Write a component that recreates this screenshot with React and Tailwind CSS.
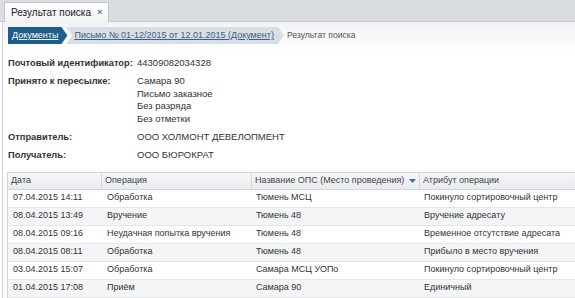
import React from "react";

const rows = [
  ["07.04.2015 14:11", "Обработка", "Тюмень МСЦ", "Покинуло сортировочный центр"],
  ["08.04.2015 13:49", "Вручение", "Тюмень 48", "Вручение адресату"],
  ["08.04.2015 09:16", "Неудачная попытка вручения", "Тюмень 48", "Временное отсутствие адресата"],
  ["08.04.2015 08:11", "Обработка", "Тюмень 48", "Прибыло в место вручения"],
  ["03.04.2015 15:07", "Обработка", "Самара МСЦ УОПо", "Покинуло сортировочный центр"],
  ["01.04.2015 17:08", "Приём", "Самара 90", "Единичный"],
];

export default function App() {
  return (
    <div className="w-[575px] h-[298px] overflow-hidden bg-white text-[#333] [font-family:'Liberation_Sans',Arial,sans-serif]">
      <div className="h-[22px] bg-[#d9dce0] border-b border-[#c6cacf] flex items-end pl-[4px]">
        <div className="relative -mb-[1px] h-[20px] w-[105px] bg-gradient-to-b from-white to-[#f0f2f4] border border-b-0 border-[#c3c7cc] flex items-center pl-[6px] text-[10px] text-[#222]">
          <span>Результат поиска</span>
          <span className="ml-[6px] text-[#3f7fc0] text-[9px] font-bold leading-none">×</span>
        </div>
      </div>
      <div className="ml-[2px] border-l border-[#c9d4df] h-[276px]">
        <div className="h-[30px] bg-gradient-to-b from-[#f0f2f4] to-white pl-[5px] pt-[5px] flex items-start text-[9px]">
          <div className="h-[17px] flex items-center bg-[#1d5d8a] pl-[4px] pr-[9px] [clip-path:polygon(0_0,calc(100%-6px)_0,100%_50%,calc(100%-6px)_100%,0_100%)]">
            <span className="text-white underline">Документы</span>
          </div>
          <div className="-ml-[1px] h-[17px] flex items-center bg-[#d7dee6] pl-[8px] pr-[10px] [clip-path:polygon(0_0,calc(100%-6px)_0,100%_50%,calc(100%-6px)_100%,0_100%,6px_50%)]">
            <span className="text-[#3d5f80] underline">Письмо № 01-12/2015 от 12.01.2015 (Документ)</span>
          </div>
          <div className="h-[17px] flex items-center pl-[3px] text-[#555] text-[8.6px]">Результат поиска</div>
        </div>
        <div className="pl-[5px] pt-[5px] text-[9.5px] leading-[12.5px]">
          <div className="flex">
            <div className="w-[129px] font-bold text-[#333] text-[9.3px]">Почтовый идентификатор:</div>
            <div>44309082034328</div>
          </div>
          <div className="flex mt-[5.5px]">
            <div className="w-[129px] font-bold text-[9.3px]">Принято к пересылке:</div>
            <div className="flex flex-col">
              <span>Самара 90</span>
              <span>Письмо заказное</span>
              <span>Без разряда</span>
              <span>Без отметки</span>
            </div>
          </div>
          <div className="flex mt-[6px]">
            <div className="w-[129px] font-bold text-[9.3px]">Отправитель:</div>
            <div>ООО ХОЛМОНТ ДЕВЕЛОПМЕНТ</div>
          </div>
          <div className="flex mt-[5.5px]">
            <div className="w-[129px] font-bold text-[9.3px]">Получатель:</div>
            <div>ООО БЮРОКРАТ</div>
          </div>
        </div>
        <div className="ml-[4px] mt-[10px] w-[620px] border-l border-t border-[#cfd4da] text-[9px]">
          <div className="flex h-[17px] bg-gradient-to-b from-[#f5f6f8] to-[#e9ecef] border-b border-[#cfd4da] text-[#444]">
            <div className="w-[94px] pl-[3px] flex items-center border-r border-[#d3d7dc]">Дата</div>
            <div className="w-[150px] pl-[3px] flex items-center border-r border-[#d3d7dc]">Операция</div>
            <div className="w-[168px] pl-[3px] flex items-center border-r border-[#d3d7dc] justify-between pr-[3px]">
              <span>Название ОПС (Место проведения)</span>
              <svg width="7" height="4" viewBox="0 0 7 4"><path d="M0 0h7L3.5 4z" fill="#3a6ea5" /></svg>
            </div>
            <div className="flex-1 pl-[3px] flex items-center">Атрибут операции</div>
          </div>
          {rows.map((r, i) => (
            <div key={i} className={`flex h-[18px] border-b border-[#e4e7ea] ${i % 2 ? "bg-[#f3f5f7]" : "bg-white"}`}>
              <div className="w-[94px] pl-[5px] flex items-center">{r[0]}</div>
              <div className="w-[150px] pl-[5px] flex items-center">{r[1]}</div>
              <div className="w-[168px] pl-[4px] flex items-center">{r[2]}</div>
              <div className="flex-1 pl-[4px] flex items-center">{r[3]}</div>
            </div>
          ))}
        </div>
      </div>
    </div>
  );
}
